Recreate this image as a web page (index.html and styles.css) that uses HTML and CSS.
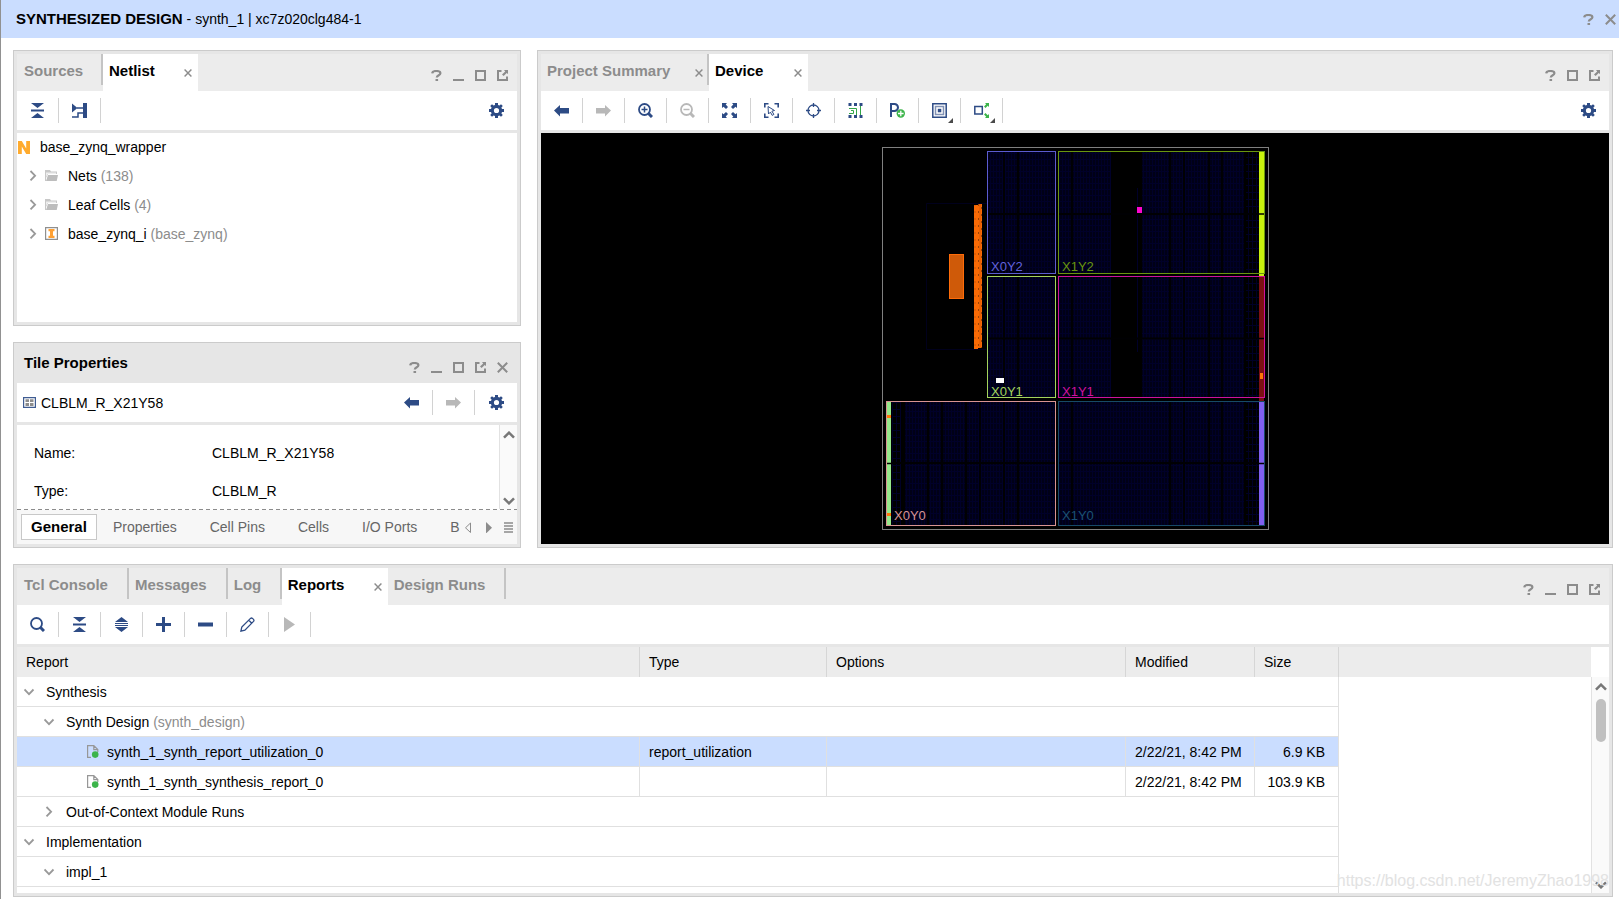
FILE: index.html
```html
<!DOCTYPE html>
<html lang="en">
<head>
<meta charset="utf-8">
<title>Synthesized Design</title>
<link rel="stylesheet" href="styles.css">
</head>
<body>
<svg class="sprite" aria-hidden="true">
  <symbol id="help" viewBox="0 0 11 11"><path d="M1.200 3.400C1.400 1.700 3 1 5.300 1c2.500 0 4.100.700 4.100 2.300 0 2-3.600 1.800-3.600 4.200" fill="none" stroke="currentColor" stroke-width="2.200"/><path d="M4.500 9h2.600v2H4.500z" fill="currentColor"/></symbol>
  <symbol id="min" viewBox="0 0 11 11"><path d="M0 9h11v2H0z" fill="currentColor"/></symbol>
  <symbol id="max" viewBox="0 0 11 11"><path d="M1 1h9v9H1z" fill="none" stroke="currentColor" stroke-width="2"/></symbol>
  <symbol id="pop" viewBox="0 0 11 11"><path d="M4.500 1H1v9h9V6.500" fill="none" stroke="currentColor" stroke-width="2"/><path d="M7 0h4v4L9.700 2.900 6.600 6 5 4.400l3.200-3z" fill="currentColor"/></symbol>
  <symbol id="x" viewBox="0 0 11 11"><path d="M.8.8l9.400 9.400M10.200.8L.8 10.200" fill="none" stroke="currentColor" stroke-width="2"/></symbol>
  <symbol id="collapse" viewBox="0 0 15 15"><path d="M1 0h13L7.500 5zM1 6.500h13v2H1zM1 15h13l-6.500-5z" fill="currentColor"/></symbol>
  <symbol id="expand" viewBox="0 0 15 15"><path d="M1 5h13L7.500 0zM1 6h13v1H1zM1 8h13v1H1zM1 10h13L7.500 15z" fill="currentColor"/></symbol>
  <symbol id="netio" viewBox="0 0 15 15"><path d="M0 .5l5.500 4.500L0 9.500z" fill="currentColor"/><path d="M11 0h4v15h-4z" fill="currentColor"/><path d="M5 5h6M0 14h6v-4h5" fill="none" stroke="currentColor" stroke-width="1.500"/></symbol>
  <symbol id="gear" viewBox="0 0 15 15"><path d="M6 0h3v2l1.500.600L12 1.200 13.800 3l-1.400 1.500.600 1.500h2v3h-2l-.6 1.500 1.400 1.500-1.800 1.800-1.500-1.400-1.500.6v2H6v-2l-1.500-.6L3 13.800 1.200 12l1.400-1.500L2 9H0V6h2l.6-1.500L1.200 3 3 1.200l1.500 1.400L6 2zM7.500 4.900a2.600 2.600 0 1 0 0 5.200 2.600 2.600 0 0 0 0-5.200z" fill="currentColor" fill-rule="evenodd"/></symbol>
  <symbol id="left" viewBox="0 0 15 15"><path d="M0 7.500L6 2v3h9v5.500H6v3z" fill="currentColor"/></symbol>
  <symbol id="right" viewBox="0 0 15 15"><path d="M15 7.500L9 2v3H0v5.500h9v3z" fill="currentColor"/></symbol>
  <symbol id="zoomin" viewBox="0 0 15 15"><circle cx="6.500" cy="6.500" r="5.500" fill="none" stroke="currentColor" stroke-width="1.800"/><path d="M3.500 6.500h6M6.500 3.500v6" stroke="currentColor" stroke-width="1.500"/><path d="M10.500 10.500l3.500 3.500" stroke="currentColor" stroke-width="3"/></symbol>
  <symbol id="zoomout" viewBox="0 0 15 15"><circle cx="6.500" cy="6.500" r="5.500" fill="none" stroke="currentColor" stroke-width="1.800"/><path d="M3.500 6.500h6" stroke="currentColor" stroke-width="1.500"/><path d="M10.500 10.500l3.500 3.500" stroke="currentColor" stroke-width="3"/></symbol>
  <symbol id="fit" viewBox="0 0 15 15"><path d="M0 0h5L3.700 1.500 6 4 4 6 1.500 3.700 0 5zM15 0v5l-1.500-1.300L11 6 9 4l2.300-2.500L10 0zM0 15v-5l1.500 1.300L4 9l2 2-2.300 2.500L5 15zM15 15h-5l1.300-1.500L9 11l2-2 2.500 2.300L15 10z" fill="currentColor"/></symbol>
  <symbol id="fitsel" viewBox="0 0 15 15"><path d="M.8 4.500V.8h3.700M10.500.8h3.700v3.700M14.200 10.500v3.700h-3.700M4.500 14.200H.8v-3.700" fill="none" stroke="currentColor" stroke-width="1.600"/><path d="M4 3.500l6.500 4-2.600.7 2 3.200-1.700 1-1.800-3.300L4.500 11z" fill="none" stroke="currentColor"/></symbol>
  <symbol id="target" viewBox="0 0 15 15"><circle cx="7.500" cy="7.500" r="5.500" fill="none" stroke="currentColor" stroke-width="1.300"/><path d="M7.500 0v4M7.500 11v4M0 7.500h4M11 7.500h4" stroke="currentColor" stroke-width="1.300"/></symbol>
  <symbol id="route" viewBox="0 0 15 15"><path d="M.5 0h3v3h-3zM6 0h3v3H6zM11.500 0h3v3h-3zM.5 12h3v3h-3zM6 12h3v3H6zM11.500 12h3v3h-3z" fill="currentColor"/><path d="M1 5.500h7.500V12M1 10.500h4.500v-3H3M12.500 3v9" fill="none" stroke="#32a548"/></symbol>
  <symbol id="pblock" viewBox="0 0 15 15"><path d="M1 14V1h3.500a3.400 3.400 0 0 1 0 7H1" fill="none" stroke="currentColor" stroke-width="2"/><circle cx="10.800" cy="10.500" r="4.200" fill="#3cb44a"/><path d="M8 10.500h5.600M10.800 7.700v5.600" stroke="#fff" stroke-width="1.300"/></symbol>
  <symbol id="layers" viewBox="0 0 15 15"><path d="M.8.8h13.400v13.400H.8z" fill="none" stroke="currentColor" stroke-width="1.500"/><path d="M3.500 3.500h8v8h-8z" fill="none" stroke="#8292b5" stroke-width="1.500"/><path d="M5.800 5.800h3.500v3.500H5.800z" fill="currentColor"/></symbol>
  <symbol id="conn" viewBox="0 0 15 15"><path d="M.8 3.500h7.500V11H.8z" fill="none" stroke="currentColor" stroke-width="1.500"/><path d="M11 0h4v4l-1.300-1.200L11.500 5 10 3.600l2.200-2.300zM11 15h4v-4l-1.300 1.200L11.500 10 10 11.400l2.200 2.300z" fill="#3cb44a"/></symbol>
  <symbol id="search" viewBox="0 0 15 15"><circle cx="6.500" cy="6.500" r="5.500" fill="none" stroke="currentColor" stroke-width="1.800"/><path d="M10.500 10.500l3.500 3.500" stroke="currentColor" stroke-width="3"/></symbol>
  <symbol id="plus" viewBox="0 0 15 15"><path d="M6 0h3v6h6v3H9v6H6V9H0V6h6z" fill="currentColor"/></symbol>
  <symbol id="minus" viewBox="0 0 15 15"><path d="M0 5.500h15v4H0z" fill="currentColor"/></symbol>
  <symbol id="pencil" viewBox="0 0 15 15"><path d="M.9 14.100l.9-4.100 8.700-8.600q1-.9 2 0l1 1q.9 1 0 2L4.900 13.200zM8.800 3.200l3 3" fill="none" stroke="currentColor" stroke-width="1.300"/></symbol>
  <symbol id="play" viewBox="0 0 15 15"><path d="M2 0l11 7.500L2 15z" fill="currentColor"/></symbol>
  <symbol id="chev" viewBox="0 0 11 11"><path d="M2.500 1l4.600 4.700-4.600 4.700" fill="none" stroke="currentColor" stroke-width="1.800"/></symbol>
  <symbol id="chevd" viewBox="0 0 11 11"><path d="M.5 3.500l4.500 4.600 4.500-4.600" fill="none" stroke="currentColor" stroke-width="1.800"/></symbol>
  <symbol id="folder" viewBox="0 0 13 11"><path d="M0 0h5l1 1.500h6V4H3L1 8v3H0z" fill="#c8c8c8"/><path d="M1 2.500h10V4H2.500L1 7z" fill="#eee"/><path d="M3 5h10l-1.300 6H1z" fill="#bdbdbd"/></symbol>
  <symbol id="inst" viewBox="0 0 13 13"><path d="M.6.6h11.800v11.800H.6z" fill="#fff" stroke="#8f8f8f" stroke-width="1.200"/><path d="M3.500 2h6v2.200H8v4.600h1.500V11h-6V8.800H5V4.200H3.500z" fill="#ffa033"/></symbol>
  <symbol id="net" viewBox="0 0 12 13"><path d="M0 0h3.800l4.400 7.500V0H12v13H8.200L3.800 5.500V13H0z" fill="#ffab2e"/></symbol>
  <symbol id="tile" viewBox="0 0 13 11"><path d="M.6.6h11.800v9.800H.6z" fill="#fff" stroke="#3f5c92" stroke-width="1.200"/><path d="M2.500 2.200H6v2.900H2.500zM7 2.200h3.500v2.900H7zM2.500 6H6v2.900H2.500zM7 6h3.500v2.900H7z" fill="#8d8d8d"/></symbol>
  <symbol id="doc" viewBox="0 0 12 13"><path d="M4 12.400H.6V.6h6.200l4 4V7M6.800.6v4h4" fill="none" stroke="#979797" stroke-width="1.200"/><circle cx="8.200" cy="9.600" r="3.300" fill="#3cb44a"/></symbol>
  <symbol id="up" viewBox="0 0 12 8"><path d="M1 6.700l5-5 5 5" fill="none" stroke="currentColor" stroke-width="2.500"/></symbol>
  <symbol id="down" viewBox="0 0 12 8"><path d="M1 1.300l5 5 5-5" fill="none" stroke="currentColor" stroke-width="2.500"/></symbol>
</svg>

<header class="titlebar">
  <h1 class="title"><b>SYNTHESIZED DESIGN</b> - synth_1 | xc7z020clg484-1</h1>
  <div class="wins title-wins">
    <button class="win" aria-label="Help"><svg><use href="#help"/></svg></button>
    <button class="win" aria-label="Close"><svg><use href="#x"/></svg></button>
  </div>
</header>

<main class="workspace">
  <div class="side">
    <section class="panel netlist">
      <div class="head">
        <div class="tabs">
          <button class="tab tab-sources">Sources</button>
          <div class="tab active"><button class="tab-label">Netlist</button><button class="close" aria-label="Close Netlist"><svg><use href="#x"/></svg></button></div>
        </div>
        <div class="wins">
          <button class="win" aria-label="Help"><svg><use href="#help"/></svg></button>
          <button class="win" aria-label="Minimize"><svg><use href="#min"/></svg></button>
          <button class="win" aria-label="Maximize"><svg><use href="#max"/></svg></button>
          <button class="win" aria-label="Float"><svg><use href="#pop"/></svg></button>
        </div>
      </div>
      <div class="toolbar">
        <button class="tool" aria-label="Collapse all"><svg><use href="#collapse"/></svg></button>
        <button class="tool" aria-label="Show net"><svg><use href="#netio"/></svg></button>
        <button class="tool last" aria-label="Settings"><svg><use href="#gear"/></svg></button>
      </div>
      <div class="tree">
        <div class="node root"><svg class="i-net"><use href="#net"/></svg>base_zynq_wrapper</div>
        <ul class="nodes">
          <li class="node"><svg class="chev"><use href="#chev"/></svg><svg class="i-folder"><use href="#folder"/></svg><span>Nets <span class="dim">(138)</span></span></li>
          <li class="node"><svg class="chev"><use href="#chev"/></svg><svg class="i-folder"><use href="#folder"/></svg><span>Leaf Cells <span class="dim">(4)</span></span></li>
          <li class="node"><svg class="chev"><use href="#chev"/></svg><svg class="i-inst"><use href="#inst"/></svg><span>base_zynq_i <span class="dim">(base_zynq)</span></span></li>
        </ul>
      </div>
    </section>

    <section class="panel props">
      <div class="head plain">
        <h2 class="head-title">Tile Properties</h2>
        <div class="wins">
          <button class="win" aria-label="Help"><svg><use href="#help"/></svg></button>
          <button class="win" aria-label="Minimize"><svg><use href="#min"/></svg></button>
          <button class="win" aria-label="Maximize"><svg><use href="#max"/></svg></button>
          <button class="win" aria-label="Float"><svg><use href="#pop"/></svg></button>
          <button class="win" aria-label="Close"><svg><use href="#x"/></svg></button>
        </div>
      </div>
      <div class="toolbar">
        <div class="object"><svg class="i-tile"><use href="#tile"/></svg>CLBLM_R_X21Y58</div>
        <button class="tool" aria-label="Back"><svg><use href="#left"/></svg></button>
        <button class="tool off" aria-label="Forward"><svg><use href="#right"/></svg></button>
        <button class="tool last" aria-label="Settings"><svg><use href="#gear"/></svg></button>
      </div>
      <div class="props-body">
        <dl class="fields">
          <dt>Name:</dt><dd>CLBLM_R_X21Y58</dd>
          <dt>Type:</dt><dd>CLBLM_R</dd>
        </dl>
        <div class="scroll"><svg><use href="#up"/></svg><svg class="scroll-end"><use href="#down"/></svg></div>
      </div>
      <div class="dashes"></div>
      <div class="subtabs">
        <button class="subtab current">General</button>
        <button class="subtab">Properties</button>
        <button class="subtab">Cell Pins</button>
        <button class="subtab">Cells</button>
        <button class="subtab">I/O Ports</button>
        <button class="subtab cut">B</button>
        <div class="pager">
          <button class="win" aria-label="Previous tabs"><svg viewBox="0 0 11 11"><path d="M7.500 1v9.500L2.500 5.800z" fill="none" stroke="currentColor"/></svg></button>
          <button class="win" aria-label="Next tabs"><svg viewBox="0 0 11 11"><path d="M3 0v11.500l6-5.700z" fill="currentColor"/></svg></button>
          <button class="win" aria-label="Tab list"><svg viewBox="0 0 11 11"><path d="M1 1h9M1 4h9M1 7h9M1 10h9" stroke="currentColor" stroke-width="1.700"/></svg></button>
        </div>
      </div>
    </section>
  </div>

  <section class="panel device">
    <div class="head">
      <div class="tabs">
        <div class="tab tab-summary"><button class="tab-label">Project Summary</button><button class="close" aria-label="Close Project Summary"><svg><use href="#x"/></svg></button></div>
        <div class="tab active"><button class="tab-label">Device</button><button class="close" aria-label="Close Device"><svg><use href="#x"/></svg></button></div>
      </div>
      <div class="wins">
        <button class="win" aria-label="Help"><svg><use href="#help"/></svg></button>
        <button class="win" aria-label="Maximize"><svg><use href="#max"/></svg></button>
        <button class="win" aria-label="Float"><svg><use href="#pop"/></svg></button>
      </div>
    </div>
    <div class="toolbar">
      <button class="tool" aria-label="Back"><svg><use href="#left"/></svg></button>
      <button class="tool off" aria-label="Forward"><svg><use href="#right"/></svg></button>
      <button class="tool" aria-label="Zoom in"><svg><use href="#zoomin"/></svg></button>
      <button class="tool off" aria-label="Zoom out"><svg><use href="#zoomout"/></svg></button>
      <button class="tool" aria-label="Zoom fit"><svg><use href="#fit"/></svg></button>
      <button class="tool" aria-label="Fit selection"><svg><use href="#fitsel"/></svg></button>
      <button class="tool" aria-label="Autofit selection"><svg><use href="#target"/></svg></button>
      <button class="tool" aria-label="Routing resources"><svg><use href="#route"/></svg></button>
      <button class="tool" aria-label="Draw Pblock"><svg><use href="#pblock"/></svg></button>
      <button class="tool more" aria-label="Layers"><svg><use href="#layers"/></svg></button>
      <button class="tool more" aria-label="Connectivity"><svg><use href="#conn"/></svg></button>
      <button class="tool last" aria-label="Settings"><svg><use href="#gear"/></svg></button>
    </div>
    <div class="canvas">
      <svg class="chip" viewBox="881 147 388 383" role="img" aria-label="Device floorplan">
        <defs>
          <pattern id="fabric" width="6" height="6" patternUnits="userSpaceOnUse"><rect width="6" height="6" fill="#000016"/><path d="M.5 0v6M3.500 0v6M0 3.500h6" stroke="#000029"/></pattern>
          <pattern id="sparse" width="4" height="7" patternUnits="userSpaceOnUse"><path d="M.5 0v7M1 3.500h3" stroke="#000026"/></pattern>
          <pattern id="ps" width="8" height="7" patternUnits="userSpaceOnUse"><rect width="8" height="7" fill="#f96a05"/><path d="M2.500 1v2M5.500 4v2M7 1.500v1" stroke="#9c4204"/><path d="M4 0v7" stroke="#d95a04"/></pattern>
        </defs>
        <rect x="882.500" y="147.500" width="386" height="382" fill="none" stroke="#808080"/>
        <path d="M987 203.500h-60.500v146h60" fill="none" stroke="#00001c"/>
        <g fill="url(#fabric)">
          <rect x="988" y="152" width="67" height="121"/><rect x="988" y="277" width="67" height="120"/>
          <rect x="1059" y="152" width="52" height="121"/><rect x="1059" y="277" width="52" height="120"/>
          <rect x="1142" y="152" width="102" height="121"/><rect x="1142" y="277" width="102" height="120"/>
          <rect x="905" y="402" width="150" height="123"/><rect x="1059" y="402" width="185" height="123"/>
        </g>
        <g fill="url(#sparse)">
          <rect x="1246" y="152" width="13" height="121"/><rect x="1246" y="277" width="13" height="120"/><rect x="1246" y="402" width="13" height="123"/><rect x="892" y="402" width="9" height="123"/>
        </g>
        <path d="M1137.500 188v84M1137.500 277v75" stroke="#000029"/>
        <path d="M1004 152v121M1018 152v121M1072 152v121M1170 152v121M1184 152v121M1209 152v121M1222 152v121M1004 277v120M1018 277v120M1072 277v120M1170 277v120M1184 277v120M1209 277v120M1222 277v120M928 402v123M942 402v123M966 402v123M980 402v123M1004 402v123M1018 402v123M1072 402v123M1170 402v123M1184 402v123M1209 402v123M1222 402v123M988 214h271M988 338.500h271M892 463h367" stroke="#000003" stroke-width="2"/>
        <rect x="949.500" y="254.500" width="14" height="44" fill="#cf5a09" stroke="#ff6c08"/>
        <path d="M974 205h4v-1h3v144h-3v1h-4z" fill="url(#ps)"/>
        <rect x="978" y="204" width="4" height="144" fill="url(#ps)"/>
        <rect x="1137" y="207" width="5" height="6" fill="#fb06cf"/>
        <rect x="1259" y="151" width="5" height="125" fill="#c8f20d"/>
        <rect x="1259" y="277" width="5" height="124" fill="#7c1012"/>
        <rect x="1259" y="402" width="5" height="123" fill="#8060f0"/>
        <rect x="887" y="402" width="4" height="123" fill="#96e88a"/>
        <path d="M1259 214h5M1259 338.500h5M887 463.500h4M1259 463.500h5" stroke="#000" stroke-width="1.500"/>
        <path d="M1260 373h3v6h-3zM887 415h4v3h-4zM887 513h4v3h-4z" fill="#ff7608"/>
        <g fill="none">
          <rect x="987.500" y="151.500" width="68" height="122" stroke="#5c5cd0"/>
          <rect x="1058.500" y="151.500" width="206" height="122" stroke="#69960f"/>
          <rect x="987.500" y="276.500" width="68" height="121" stroke="#a4d45c"/>
          <rect x="1058.500" y="276.500" width="206" height="121" stroke="#d0129c"/>
          <rect x="886.500" y="401.500" width="169" height="124" stroke="#d89492"/>
          <rect x="1058.500" y="401.500" width="206" height="124" stroke="#174a66"/>
        </g>
        <rect x="996" y="378" width="8" height="5" fill="#fff"/>
        <g class="region">
          <text x="991" y="271" fill="#6262dc">X0Y2</text><text x="1062" y="271" fill="#69960f">X1Y2</text>
          <text x="991" y="396" fill="#a4d45c">X0Y1</text><text x="1062" y="396" fill="#d0129c">X1Y1</text>
          <text x="894" y="520" fill="#d89492">X0Y0</text><text x="1062" y="520" fill="#1b5273">X1Y0</text>
        </g>
      </svg>
    </div>
  </section>

  <section class="panel reports">
    <div class="head">
      <div class="tabs">
        <button class="tab tab-tcl">Tcl Console</button>
        <button class="tab tab-mid">Messages</button>
        <button class="tab tab-log">Log</button>
        <div class="tab active tab-reports"><button class="tab-label">Reports</button><button class="close" aria-label="Close Reports"><svg><use href="#x"/></svg></button></div>
        <button class="tab tab-mid">Design Runs</button>
      </div>
      <div class="wins">
        <button class="win" aria-label="Help"><svg><use href="#help"/></svg></button>
        <button class="win" aria-label="Minimize"><svg><use href="#min"/></svg></button>
        <button class="win" aria-label="Maximize"><svg><use href="#max"/></svg></button>
        <button class="win" aria-label="Float"><svg><use href="#pop"/></svg></button>
      </div>
    </div>
    <div class="toolbar">
      <button class="tool" aria-label="Search"><svg><use href="#search"/></svg></button>
      <button class="tool" aria-label="Collapse all"><svg><use href="#collapse"/></svg></button>
      <button class="tool" aria-label="Expand all"><svg><use href="#expand"/></svg></button>
      <button class="tool" aria-label="Add"><svg><use href="#plus"/></svg></button>
      <button class="tool" aria-label="Remove"><svg><use href="#minus"/></svg></button>
      <button class="tool" aria-label="Edit"><svg><use href="#pencil"/></svg></button>
      <button class="tool off" aria-label="Run"><svg><use href="#play"/></svg></button>
    </div>
    <div class="grid">
      <table class="table">
        <colgroup><col class="c-report"><col class="c-type"><col class="c-options"><col class="c-modified"><col class="c-size"><col></colgroup>
        <thead><tr><th>Report</th><th>Type</th><th>Options</th><th>Modified</th><th>Size</th><th class="rest"></th></tr></thead>
        <tbody>
          <tr><td colspan="5"><div class="cell l1"><svg class="chev"><use href="#chevd"/></svg>Synthesis</div></td><td class="rest"></td></tr>
          <tr><td colspan="5"><div class="cell l2"><svg class="chev"><use href="#chevd"/></svg><span>Synth Design <span class="dim">(synth_design)</span></span></div></td><td class="rest"></td></tr>
          <tr class="selected"><td><div class="cell l3"><svg class="i-doc"><use href="#doc"/></svg>synth_1_synth_report_utilization_0</div></td><td>report_utilization</td><td></td><td>2/22/21, 8:42 PM</td><td class="num">6.9 KB</td><td class="rest"></td></tr>
          <tr><td><div class="cell l3"><svg class="i-doc"><use href="#doc"/></svg>synth_1_synth_synthesis_report_0</div></td><td></td><td></td><td>2/22/21, 8:42 PM</td><td class="num">103.9 KB</td><td class="rest"></td></tr>
          <tr><td colspan="5"><div class="cell l2"><svg class="chev"><use href="#chev"/></svg>Out-of-Context Module Runs</div></td><td class="rest"></td></tr>
          <tr><td colspan="5"><div class="cell l1"><svg class="chev"><use href="#chevd"/></svg>Implementation</div></td><td class="rest"></td></tr>
          <tr><td colspan="5"><div class="cell l2"><svg class="chev"><use href="#chevd"/></svg>impl_1</div></td><td class="rest"></td></tr>
          <tr><td colspan="5"></td><td class="rest"></td></tr>
        </tbody>
      </table>
      <div class="scroll-col">
        <div class="scroll"><svg><use href="#up"/></svg><div class="thumb"></div><svg class="scroll-end"><use href="#down"/></svg></div>
      </div>
      <div class="watermark">https://blog.csdn.net/JeremyZhao1998</div>
    </div>
  </section>
</main>
</body>
</html>
```
FILE: styles.css
```css
* { box-sizing: border-box; }
html, body { height: 100%; }
body {
  margin: 0;
  display: flex;
  flex-direction: column;
  overflow: hidden;
  border-left: 1px solid #919191;
  background: #fff;
  color: #000;
  font: 14px/20px "Liberation Sans", Arial, sans-serif;
}
button {
  margin: 0;
  padding: 0;
  border: 0;
  background: none;
  color: inherit;
  font: inherit;
}
svg { display: block; flex: none; }
.sprite { position: absolute; width: 0; height: 0; }

/* Title bar */
.titlebar {
  flex: none;
  display: flex;
  justify-content: space-between;
  align-items: center;
  height: 38px;
  padding-left: 15px;
  background: #caddff;
}
.title { margin: 0; font-size: 14px; font-weight: normal; }
.title b { font-size: 15px; }
.title-wins.wins { padding: 0; }

.workspace {
  flex: 1;
  min-height: 0;
  display: grid;
  grid-template-columns: minmax(0, 508fr) minmax(0, 1076fr);
  grid-template-rows: minmax(0, 498fr) minmax(0, 333fr);
  gap: 16px;
  padding: 12px 6px 2px 12px;
}
.side {
  display: grid;
  grid-template-rows: minmax(0, 276fr) minmax(0, 206fr);
  gap: 16px;
}
.panel {
  display: flex;
  flex-direction: column;
  min-width: 0;
  min-height: 0;
  padding: 3px;
  border: 1px solid #cbcbcb;
  background: #e6e6e6;
}
.reports { grid-column: 1 / -1; }

/* Panel header */
.head {
  flex: none;
  display: flex;
  justify-content: space-between;
  height: 37px;
  background: #ececec;
}
.head.plain { background: none; }
.head-title { margin: 0; padding: 7px; font-size: 15px; line-height: 20px; }
.tabs { display: flex; align-items: flex-start; }
.tab {
  display: flex;
  justify-content: space-between;
  align-items: flex-start;
  height: 31px;
  padding: 7px 6px;
  border-right: 2px solid #c4c4c4;
  color: #8c8c8c;
  font-size: 15px;
  font-weight: bold;
  line-height: 20px;
  text-align: left;
  white-space: nowrap;
}
.tab.active {
  width: 95px;
  height: 37px;
  border-right: 0;
  background: #fff;
  color: #000;
}
.device .tab.active { width: 99px; }
.tab.tab-reports { width: 106px; }
.tab-sources { width: 86px; padding-left: 7px; }
.tab-summary { width: 168px; padding-right: 4px; }
.tab-tcl { width: 112px; padding-left: 7px; }
.tab-mid { padding-right: 19px; }
.tab-log { width: 54px; }
.close { padding: 8px 0 0; color: #8c8c8c; }
.close svg { width: 8px; height: 8px; }
.wins {
  display: flex;
  align-items: center;
  gap: 5px;
  padding: 5px 6px 0 0;
  color: #8c8c8c;
}
.win { display: flex; justify-content: center; width: 17px; }
.win svg { width: 11px; height: 11px; }

/* Toolbar */
.toolbar {
  flex: none;
  display: flex;
  align-items: center;
  height: 42px;
  border-bottom: 3px solid #e6e6e6;
  background: #fff;
  color: #2d4b85;
}
.tool {
  position: relative;
  display: flex;
  justify-content: center;
  align-items: center;
  width: 42px;
  height: 25px;
  border-right: 1px solid #d2d2d2;
}
.tool svg { width: 15px; height: 15px; }
.tool.off { color: #b8b8b8; }
.tool.last { margin-left: auto; border-right: 0; }
.tool.more::after {
  content: "";
  position: absolute;
  right: 7px;
  bottom: 0;
  border-left: 5px solid transparent;
  border-bottom: 5px solid #4a4a4a;
}

/* Netlist tree */
.tree { flex: 1; min-height: 0; background: #fff; }
.node { display: flex; align-items: center; height: 29px; }
.root { gap: 10px; height: 28px; padding-left: 1px; }
.nodes { margin: 0; padding: 0 0 0 11px; list-style: none; }
.dim { color: #8c8c8c; }
.chev { width: 11px; height: 11px; color: #999; }
.i-net { width: 12px; height: 13px; }
.i-folder { width: 13px; height: 11px; margin: 0 10px 0 6px; }
.i-inst { width: 13px; height: 13px; margin: 0 10px 0 6px; }

/* Tile properties */
.object {
  flex: 1;
  display: flex;
  align-items: center;
  gap: 5px;
  padding-left: 6px;
  color: #000;
}
.i-tile { width: 13px; height: 11px; }
.props .tool.last { margin-left: 0; }
.props-body { flex: 1; min-height: 0; display: flex; background: #fff; }
.fields {
  flex: 1;
  display: grid;
  grid-template-columns: 178px 1fr;
  grid-auto-rows: 20px;
  gap: 18px 0;
  margin: 0;
  padding: 18px 0 0 17px;
}
.fields dd { margin: 0; }
.scroll {
  flex: none;
  display: flex;
  flex-direction: column;
  align-items: center;
  width: 18px;
  padding: 6px 0 4px;
  border-left: 1px solid #e2e2e2;
  background: #fafafa;
  color: #777;
}
.scroll svg { width: 12px; height: 8px; }
.scroll-end { margin-top: auto; }
.dashes {
  flex: none;
  height: 1px;
  background: repeating-linear-gradient(to right, #8c8c8c 0 4px, #fff 4px 7px);
}
.subtabs {
  flex: none;
  display: flex;
  align-items: center;
  height: 34px;
  padding-left: 4px;
  background: #f7f7f7;
  color: #666;
}
.subtab { height: 26px; margin-left: 16px; margin-right: 17px; white-space: nowrap; }
.subtab.current {
  margin: 0;
  padding: 0 9px;
  border: 1px solid #c8c8c8;
  background: #fff;
  color: #000;
  font-size: 15px;
  font-weight: bold;
}
.subtab.cut { margin-right: 0; }
.pager { display: flex; gap: 3px; margin-left: auto; padding-right: 5px; color: #8c8c8c; }

/* Device view */
.canvas {
  flex: 1;
  min-height: 0;
  display: flex;
  justify-content: center;
  align-items: center;
  background: #000;
}
.chip { width: 388px; height: 383px; }
.region { font-size: 13px; }

/* Reports table */
.grid {
  position: relative;
  flex: 1;
  min-height: 0;
  display: flex;
  overflow: hidden;
  background: #fff;
}
.table {
  flex: 1;
  align-self: flex-start;
  width: 100%;
  min-width: 0;
  table-layout: fixed;
  border-spacing: 0;
}
.c-report { width: 623px; }
.c-type { width: 187px; }
.c-options { width: 299px; }
.c-modified { width: 129px; }
.c-size { width: 84px; }
th, td {
  height: 30px;
  padding: 0 9px;
  border-right: 1px solid #e0e0e0;
  border-bottom: 1px solid #e0e0e0;
  font-weight: normal;
  line-height: 20px;
  text-align: left;
  white-space: nowrap;
}
th { border-right-color: #d6d6d6; border-bottom: 0; background: #ececec; }
td.num { padding-right: 13px; text-align: right; }
.rest { border-right: 0; }
td.rest { border-bottom: 0; }
.selected td:not(.rest) { background: #caddff; }
.cell { display: flex; align-items: center; }
.cell .chev { margin-right: 11px; }
.cell.l1 { margin-left: -2px; }
.cell.l2 { padding-left: 18px; }
.cell.l3 { padding-left: 61px; }
.i-doc { width: 12px; height: 13px; margin-right: 8px; }
.scroll-col { display: flex; width: 18px; padding-top: 30px; }
.thumb {
  width: 10px;
  height: 43px;
  margin-top: 8px;
  border-radius: 5px;
  background: #c0c0c0;
}
.watermark {
  position: absolute;
  right: 0;
  bottom: 2px;
  color: #e2e2e2;
  font-size: 16px;
}
```
